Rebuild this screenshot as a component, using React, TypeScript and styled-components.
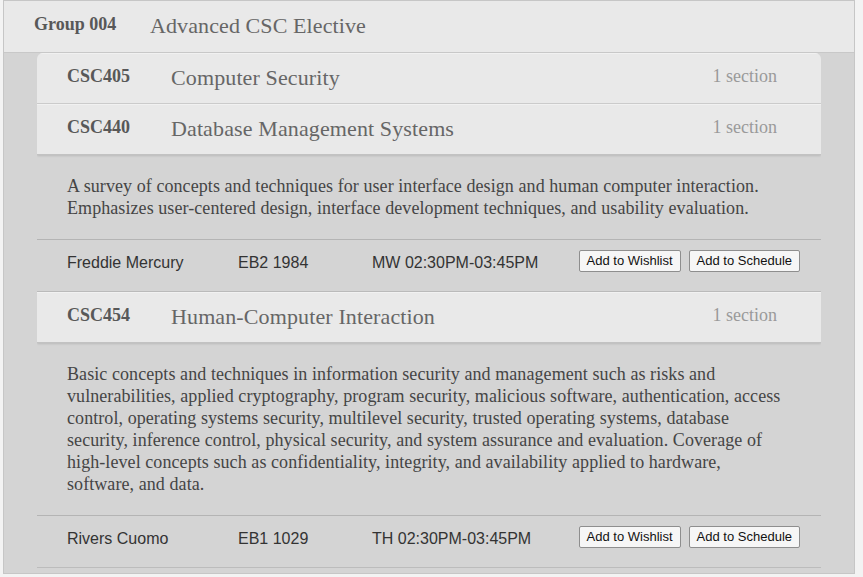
import React from "react";
import styled, { createGlobalStyle } from "styled-components";

const Global = createGlobalStyle`
  html, body { margin: 0; padding: 0; }
  body {
    background: #f3f3f3;
    font-family: "Liberation Serif", "Times New Roman", serif;
    width: 863px;
    height: 577px;
    overflow: hidden;
  }
`;

const Group = styled.section`
  width: 850px;
  margin-left: 3px;
  background: #d4d4d4;
  border: 1px solid #c6c6c6;
  padding-bottom: 5px;
`;

const GroupHeader = styled.header`
  display: flex;
  align-items: flex-start;
  height: 52px;
  box-sizing: border-box;
  padding: 13px 30px 0;
  background: #e9e9e9;
  border-bottom: 1px solid #c8c8c8;
`;

const GroupLabel = styled.span`
  width: 116px;
  font-size: 18px;
  line-height: 20px;
  font-weight: bold;
  color: #585858;
`;

const GroupTitle = styled.span`
  font-size: 22px;
  line-height: 24px;
  letter-spacing: 0.1px;
  color: #666;
`;

const CourseList = styled.div`
  margin: 0 33px;
  border-radius: 6px 6px 0 0;
  overflow: hidden;
`;

const CourseHeader = styled.div<{ $open?: boolean }>`
  position: relative;
  display: flex;
  align-items: flex-start;
  height: 51px;
  box-sizing: border-box;
  padding: 12px 44px 0 30px;
  background: #e9e9e9;
  border-top: 1px solid #f1f1f1;
  border-bottom: 1px solid ${(p) => (p.$open ? "#c2c2c2" : "#cdcdcd")};
  box-shadow: ${(p) => (p.$open ? "0 1px 2px rgba(0,0,0,0.12)" : "none")};
`;

const Code = styled.span`
  width: 104px;
  font-size: 18px;
  line-height: 20px;
  font-weight: bold;
  color: #585858;
`;

const CourseTitle = styled.span`
  font-size: 22px;
  line-height: 24px;
  letter-spacing: 0.12px;
  color: #666;
`;

const SectionCount = styled.span`
  margin-left: auto;
  font-size: 18px;
  line-height: 20px;
  color: #9a9a9a;
`;

const Description = styled.p`
  margin: 0;
  padding: 20px 30px 20px;
  max-width: 722px;
  font-size: 18px;
  line-height: 22px;
  letter-spacing: 0.075px;
  color: #454545;
`;

const SectionRow = styled.div`
  display: flex;
  align-items: flex-start;
  box-sizing: border-box;
  height: 53px;
  padding: 10px 21px 0 30px;
  border-top: 1px solid #b4b4b4;
  border-bottom: 1px solid #bcbcbc;
  font-family: "Liberation Sans", Arial, sans-serif;
  font-size: 16px;
  line-height: 18px;
  color: #333;
`;

const Cell = styled.span<{ $w?: number }>`
  width: ${(p) => (p.$w ? `${p.$w}px` : "auto")};
  padding-top: 4px;
`;

const Actions = styled.div`
  margin-left: auto;
  display: flex;
  gap: 8px;
`;

const Button = styled.button`
  height: 22px;
  padding: 0 7px;
  font-family: "Liberation Sans", Arial, sans-serif;
  font-size: 13px;
  line-height: 18px;
  color: #111;
  background: #f6f6f6;
  border: 1px solid #8e8e8e;
  border-radius: 2px;
`;

type Section = { instructor: string; room: string; time: string };
type Course = {
  code: string;
  title: string;
  description?: string;
  sections?: Section[];
};

const courses: Course[] = [
  { code: "CSC405", title: "Computer Security" },
  {
    code: "CSC440",
    title: "Database Management Systems",
    description:
      "A survey of concepts and techniques for user interface design and human computer interaction. Emphasizes user-centered design, interface development techniques, and usability evaluation.",
    sections: [{ instructor: "Freddie Mercury", room: "EB2 1984", time: "MW 02:30PM-03:45PM" }],
  },
  {
    code: "CSC454",
    title: "Human-Computer Interaction",
    description:
      "Basic concepts and techniques in information security and management such as risks and vulnerabilities, applied cryptography, program security, malicious software, authentication, access control, operating systems security, multilevel security, trusted operating systems, database security, inference control, physical security, and system assurance and evaluation. Coverage of high-level concepts such as confidentiality, integrity, and availability applied to hardware, software, and data.",
    sections: [{ instructor: "Rivers Cuomo", room: "EB1 1029", time: "TH 02:30PM-03:45PM" }],
  },
];

export default function App() {
  return (
    <>
      <Global />
      <Group>
        <GroupHeader>
          <GroupLabel>Group 004</GroupLabel>
          <GroupTitle>Advanced CSC Elective</GroupTitle>
        </GroupHeader>
        <CourseList>
          {courses.map((c) => (
            <div key={c.code}>
              <CourseHeader $open={!!c.description}>
                <Code>{c.code}</Code>
                <CourseTitle>{c.title}</CourseTitle>
                <SectionCount>1 section</SectionCount>
              </CourseHeader>
              {c.description && <Description>{c.description}</Description>}
              {c.sections?.map((s) => (
                <SectionRow key={s.instructor}>
                  <Cell $w={171}>{s.instructor}</Cell>
                  <Cell $w={134}>{s.room}</Cell>
                  <Cell>{s.time}</Cell>
                  <Actions>
                    <Button>Add to Wishlist</Button>
                    <Button>Add to Schedule</Button>
                  </Actions>
                </SectionRow>
              ))}
            </div>
          ))}
        </CourseList>
      </Group>
    </>
  );
}
